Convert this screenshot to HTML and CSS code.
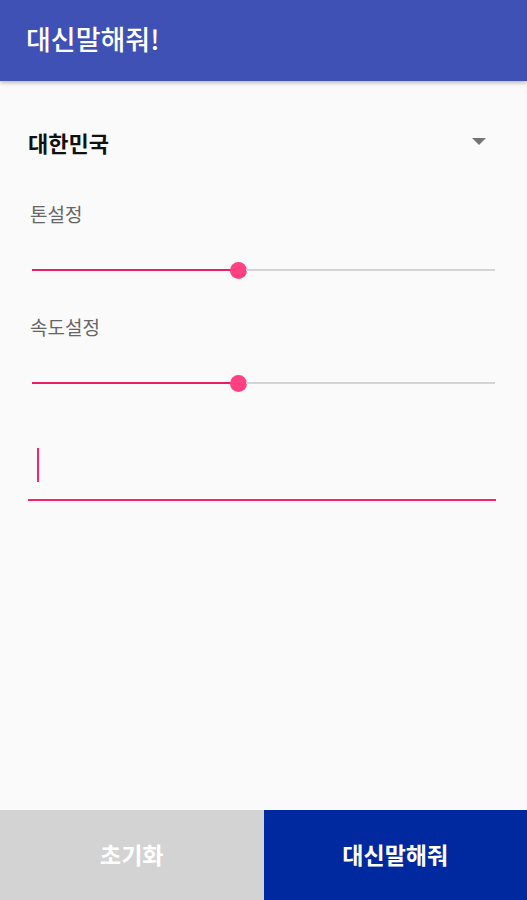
FILE: index.html
```html
<!DOCTYPE html>
<html lang="ko">
<head>
<meta charset="utf-8">
<link rel="stylesheet" href="styles.css">
</head>
<body>
<div class="app">
  <header class="appbar"><h1 class="title">대신말해줘!</h1></header>
  <main class="content">
    <div class="spinner">
      <span class="spinner-text">대한민국</span>
      <span class="spinner-arrow"></span>
    </div>
    <div class="label">톤설정</div>
    <div class="slider">
      <div class="track-active"></div>
      <div class="thumb"></div>
      <div class="track-rest"></div>
    </div>
    <div class="label">속도설정</div>
    <div class="slider">
      <div class="track-active"></div>
      <div class="thumb"></div>
      <div class="track-rest"></div>
    </div>
    <div class="edit">
      <span class="cursor"></span>
    </div>
  </main>
  <footer class="buttons">
    <button class="btn btn-reset">초기화</button>
    <button class="btn btn-speak">대신말해줘</button>
  </footer>
</div>
</body>
</html>
```
FILE: styles.css
```css
* { box-sizing: border-box; }
html, body { margin: 0; padding: 0; }
body {
  width: 527px;
  height: 900px;
  background: #fafafa;
  font-family: "Noto Sans CJK KR", "Noto Sans", Roboto, sans-serif;
  overflow: hidden;
}
.app {
  display: flex;
  flex-direction: column;
  height: 900px;
}
.appbar {
  height: 81px;
  background: #3f51b5;
  display: flex;
  align-items: center;
  padding-left: 26px;
  box-shadow: 0 2px 4px rgba(0,0,0,0.25);
  position: relative;
  z-index: 1;
}
.title {
  margin: 0;
  color: #fff;
  font-size: 27px;
  font-weight: 500;
  padding-bottom: 4px;
}
.content {
  flex: 1;
  display: flex;
  flex-direction: column;
  padding: 0 28px 0 28px;
}
.spinner {
  margin-top: 40px;
  height: 42px;
  display: flex;
  align-items: center;
  justify-content: space-between;
  padding-right: 13px;
}
.spinner-text {
  font-size: 22px;
  font-weight: 700;
  color: #111;
}
.spinner-arrow {
  width: 0;
  height: 0;
  border-left: 7px solid transparent;
  border-right: 7px solid transparent;
  border-top: 7px solid #757575;
  margin-top: -2px;
}
.label {
  margin-top: 36px;
  padding-left: 2px;
  font-size: 19px;
  color: #666;
  line-height: 30px;
}
.slider {
  margin: 32px 4px 0 4px;
  height: 18px;
  display: flex;
  align-items: center;
}
.track-active {
  width: 199px;
  height: 2px;
  background: #e91e63;
}
.thumb {
  width: 17px;
  height: 17px;
  border-radius: 50%;
  background: #ff4081;
  flex: none;
  margin: 0 -1px;
}
.track-rest {
  flex: 1;
  height: 2px;
  background: #d4d4d4;
}
.slider + .label { margin-top: 33px; }
.edit {
  margin-top: 46px;
  height: 63px;
  border-bottom: 2px solid #ff1f6e;
  display: flex;
  align-items: flex-start;
  padding-left: 9px;
  padding-top: 10px;
  margin-right: 3px;
}
.cursor {
  width: 2px;
  height: 34px;
  background: #ff1f6e;
}
.buttons {
  display: flex;
  height: 90px;
}
.btn {
  flex: 1;
  border: 0;
  margin: 0;
  font-family: inherit;
  font-size: 23px;
  font-weight: 700;
  color: #fff;
  padding: 0 0 2px 0;
}
.btn-reset { background: #d3d3d3; }
.btn-speak { background: #0029a0; }
```
